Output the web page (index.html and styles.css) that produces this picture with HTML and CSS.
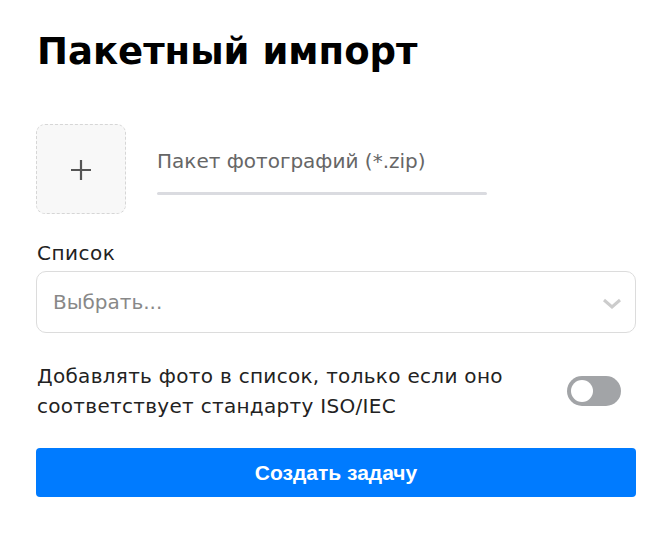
FILE: index.html
```html
<!DOCTYPE html>
<html lang="ru">
<head>
<meta charset="utf-8">
<title>Пакетный импорт</title>
<link rel="stylesheet" href="styles.css">
</head>
<body>
<main class="page">
  <h1 class="title">Пакетный импорт</h1>

  <div class="upload-row">
    <div class="upload-box">
      <svg class="plus" width="22" height="22" viewBox="0 0 22 22"><path d="M11 1v20M1 11h20" stroke="#555" stroke-width="2.2" fill="none"/></svg>
    </div>
    <div class="file-field">
      <span class="file-placeholder">Пакет фотографий (*.zip)</span>
      <div class="file-line"></div>
    </div>
  </div>

  <label class="label">Список</label>
  <div class="select">
    <span class="select-placeholder">Выбрать...</span>
    <svg class="chevron" width="20" height="11" viewBox="0 0 20 11"><path d="M2 2l8 7 8-7" stroke="#cccccc" stroke-width="3" fill="none"/></svg>
  </div>

  <div class="toggle-row">
    <p class="toggle-text">Добавлять фото в список, только если оно соответствует стандарту ISO/IEC</p>
    <div class="switch"><div class="knob"></div></div>
  </div>

  <button class="submit">Создать задачу</button>
</main>
</body>
</html>
```

FILE: styles.css
```css
* { box-sizing: border-box; }
html, body { margin: 0; padding: 0; background: #fff; }
body {
  font-family: "DejaVu Sans", "Noto Sans", sans-serif;
  color: #222;
}
.page {
  width: 600px;
  margin-left: 36px;
  padding-top: 26px;
  display: flex;
  flex-direction: column;
}
.title {
  margin: 0 0 0 1px;
  font-size: 37px;
  line-height: 52px;
  font-weight: 700;
  color: #000;
}
.upload-row {
  margin-top: 46px;
  display: flex;
  align-items: flex-start;
}
.upload-box {
  width: 90px;
  height: 90px;
  border: 1px dashed #d6d6d6;
  border-radius: 9px;
  background: #f8f8f8;
  display: flex;
  align-items: center;
  justify-content: center;
}
.plus { margin-top: 2px; }
.file-field {
  margin-left: 31px;
  width: 330px;
  padding-top: 23px;
}
.file-placeholder {
  display: block;
  font-size: 20px;
  line-height: 28px;
  color: #666;
}
.file-line {
  margin-top: 17px;
  height: 3px;
  border-radius: 2px;
  background: #dadbe0;
}
.label {
  margin: 26px 0 0 1px;
  font-size: 20px;
  line-height: 26px;
  letter-spacing: 0.5px;
  color: #222;
}
.select {
  margin-top: 5px;
  height: 62px;
  border: 1px solid #dcdcdc;
  border-radius: 10px;
  display: flex;
  align-items: center;
  justify-content: space-between;
  padding: 0 13px 0 16px;
}
.select-placeholder {
  font-size: 20px;
  color: #888;
}
.chevron { margin-top: 2px; }
.toggle-row {
  margin-top: 28px;
  display: flex;
  align-items: center;
  justify-content: space-between;
}
.toggle-text {
  margin: 0 0 0 1px;
  width: 500px;
  font-size: 20px;
  line-height: 30px;
  letter-spacing: 0.3px;
  color: #222;
}
.switch {
  width: 54px;
  height: 30px;
  border-radius: 15px;
  background: #a2a4a7;
  margin-right: 15px;
  padding: 4px;
}
.knob {
  width: 22px;
  height: 22px;
  border-radius: 50%;
  background: #fff;
}
.submit {
  margin-top: 27px;
  height: 49px;
  border: none;
  border-radius: 4px;
  background: #007bff;
  color: #fff;
  font-family: "Liberation Sans", Arial, sans-serif;
  font-weight: 700;
  font-size: 21px;
}
```
